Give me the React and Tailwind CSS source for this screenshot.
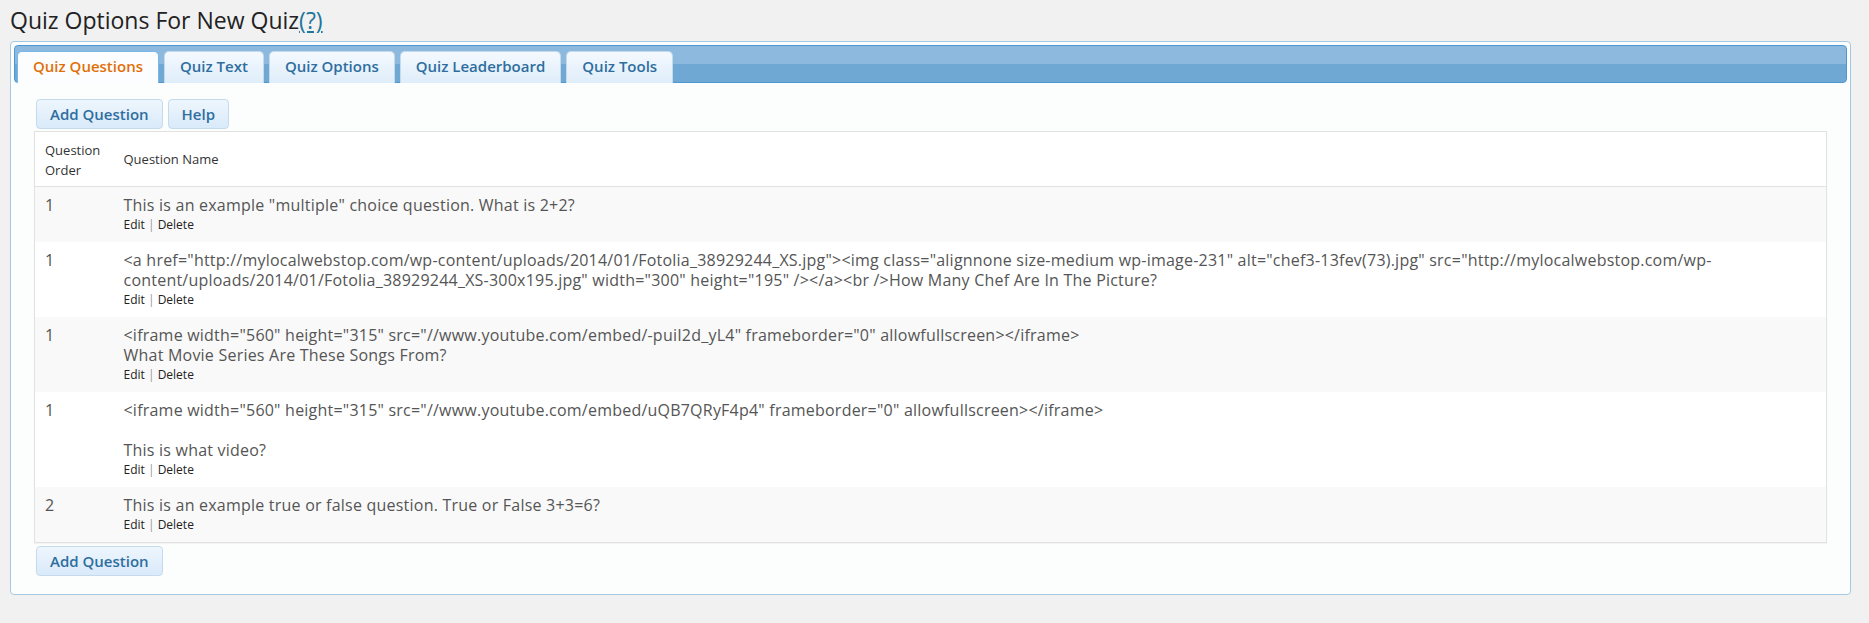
import React from "react";

// ── data ──
const questions = [
  {
    order: 1,
    lines: ['This is an example "multiple" choice question. What is 2+2?'],
  },
  {
    order: 1,
    lines: [
      '<a href="http://mylocalwebstop.com/wp-content/uploads/2014/01/Fotolia_38929244_XS.jpg"><img class="alignnone size-medium wp-image-231" alt="chef3-13fev(73).jpg" src="http://mylocalwebstop.com/wp-',
      'content/uploads/2014/01/Fotolia_38929244_XS-300x195.jpg" width="300" height="195" /></a><br />How Many Chef Are In The Picture?',
    ],
  },
  {
    order: 1,
    lines: [
      '<iframe width="560" height="315" src="//www.youtube.com/embed/-puiI2d_yL4" frameborder="0" allowfullscreen></iframe>',
      "What Movie Series Are These Songs From?",
    ],
  },
  {
    order: 1,
    lines: [
      '<iframe width="560" height="315" src="//www.youtube.com/embed/uQB7QRyF4p4" frameborder="0" allowfullscreen></iframe>',
      "",
      "This is what video?",
    ],
  },
  {
    order: 2,
    lines: ["This is an example true or false question. True or False 3+3=6?"],
  },
];

const tabs = ["Quiz Questions", "Quiz Text", "Quiz Options", "Quiz Leaderboard", "Quiz Tools"];

const UiButton = ({ children }) => (
  <button className="h-[30px] px-[13px] rounded-[4px] border border-[#c5dbec] bg-linear-to-b from-[#eef6fd] to-[#d9eafa] text-[#2e6e9e] text-[15px] font-semibold leading-none">
    {children}
  </button>
);

export default function App() {
  return (
    <div
      className="min-h-screen bg-[#f1f1f1] pl-[10px] pr-[18px] pt-[5px]"
      style={{ fontFamily: '"Open Sans", sans-serif' }}
    >
      {/* Title */}
      <h2 className="text-[23px] leading-[31px] text-[#222] font-normal">
        Quiz Options For New Quiz
        <a className="text-[#21759b] underline">(?)</a>
      </h2>

      {/* Panel */}
      <div className="mt-[5px] h-[554px] rounded-[4px] border border-[#a6c9e2] bg-[#fcfdfd] p-[3px]">
        {/* Tab bar */}
        <div className="h-[38px] rounded-[4px] border border-[#4d97d4] bg-linear-to-b from-[#8cb9dd] from-50% to-[#70a8d4] to-50% flex items-end gap-[5px] pl-[2px]">
          {tabs.map((t, i) => (
            <div
              key={t}
              className={
                i === 0
                  ? "h-[32px] -mb-px px-[15px] pb-[2px] flex items-center rounded-t-[5px] border border-b-0 border-[#79b7e7] bg-[#fbfdfe] text-[#e17009] text-[15px] font-semibold"
                  : "h-[32px] -mb-px px-[15px] pb-[2px] flex items-center rounded-t-[5px] border border-b-0 border-[#c5dbec] bg-linear-to-b from-[#f4f9fe] to-[#dfedfa] text-[#2e6e9e] text-[15px] font-semibold"
              }
            >
              {t}
            </div>
          ))}
        </div>

        {/* Content */}
        <div className="px-[20px] pt-[16px]">
          <div className="flex gap-[5px] pl-[2px]">
            <UiButton>Add Question</UiButton>
            <UiButton>Help</UiButton>
          </div>

          <table className="mt-[2px] w-full border border-[#e1e1e1] bg-white border-collapse shadow-[0_1px_1px_rgba(0,0,0,0.04)]">
            <thead>
              <tr className="border-b border-[#e1e1e1]">
                <th className="w-[79px] pl-[10px] pt-[8px] pb-[6px] text-left font-normal text-[13px] leading-[20px] text-[#333]">
                  Question
                  <br />
                  Order
                </th>
                <th className="pl-[10px] text-left font-normal text-[13px] leading-[20px] text-[#333]">
                  Question Name
                </th>
              </tr>
            </thead>
            <tbody>
              {questions.map((q, i) => (
                <tr key={i} className={i % 2 === 0 ? "bg-[#f9f9f9]" : "bg-white"}>
                  <td className="align-top pl-[10px] pt-[8px] pb-[7px] text-[16px] leading-[20px] text-[#555]">
                    {q.order}
                  </td>
                  <td className="align-top pl-[10px] pt-[8px] pb-[7px] text-[16px] tracking-[0.22px] leading-[20px] text-[#555]">
                    {q.lines.map((l, j) => (
                      <div key={j} className="whitespace-nowrap h-[20px]">
                        {l}
                      </div>
                    ))}
                    <div className="text-[12px] tracking-normal leading-[20px] text-[#222]">
                      Edit <span className="text-[#999]">|</span> Delete
                    </div>
                  </td>
                </tr>
              ))}
            </tbody>
          </table>

          <div className="mt-[3px] pl-[2px]">
            <UiButton>Add Question</UiButton>
          </div>
        </div>
      </div>
    </div>
  );
}
